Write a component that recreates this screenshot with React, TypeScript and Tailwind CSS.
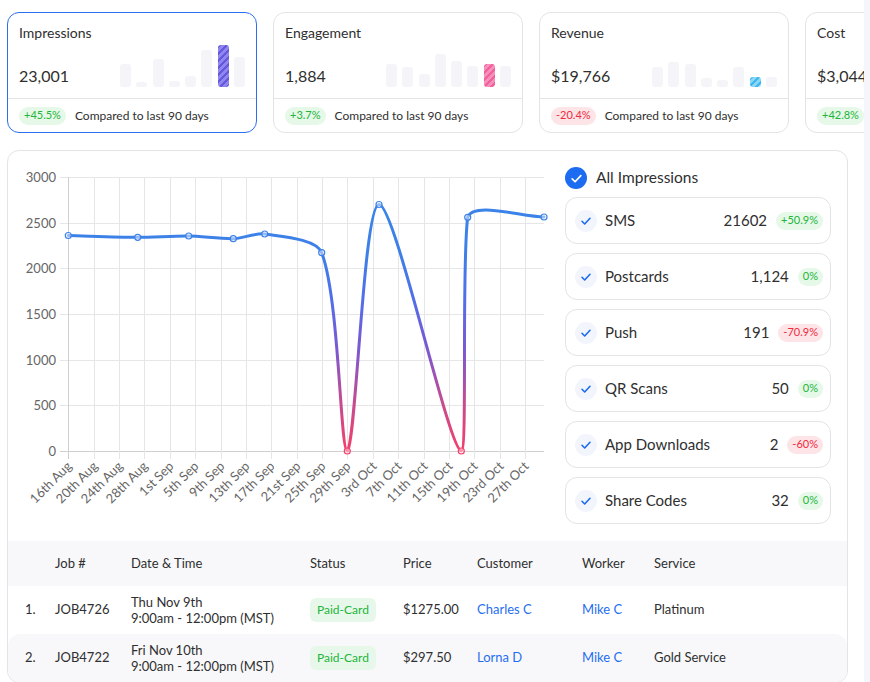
import React from "react";

type Card = {
  title: string;
  value: string;
  change: string;
  up: boolean;
  bars: number[];
  hi: number;
  hiClass: string;
  active?: boolean;
};

const CARDS: Card[] = [
  {
    title: "Impressions",
    value: "23,001",
    change: "+45.5%",
    up: true,
    bars: [23, 5, 28, 6, 11, 37, 42, 30],
    hi: 6,
    hiClass: "bg-[repeating-linear-gradient(135deg,#6558dd_0px,#6558dd_2.5px,#8f86ee_2.5px,#8f86ee_5px)]",
    active: true,
  },
  {
    title: "Engagement",
    value: "1,884",
    change: "+3.7%",
    up: true,
    bars: [23, 20, 13, 33, 26, 21, 23, 21],
    hi: 6,
    hiClass: "bg-[repeating-linear-gradient(135deg,#f0609a_0px,#f0609a_2.5px,#f78fba_2.5px,#f78fba_5px)]",
  },
  {
    title: "Revenue",
    value: "$19,766",
    change: "-20.4%",
    up: false,
    bars: [20, 25, 23, 9, 7, 20, 10, 10],
    hi: 6,
    hiClass: "bg-[repeating-linear-gradient(135deg,#3fb6ee_0px,#3fb6ee_2.5px,#8ad6f7_2.5px,#8ad6f7_5px)]",
  },
  {
    title: "Cost",
    value: "$3,044",
    change: "+42.8%",
    up: true,
    bars: [18, 24, 12, 30, 14, 22, 9, 16],
    hi: 3,
    hiClass: "bg-[repeating-linear-gradient(135deg,#f5a524_0px,#f5a524_2.5px,#f8c46e_2.5px,#f8c46e_5px)]",
  },
];

const CHANNELS = [
  { name: "SMS", count: "21602", change: "+50.9%", up: true },
  { name: "Postcards", count: "1,124", change: "0%", up: true },
  { name: "Push", count: "191", change: "-70.9%", up: false },
  { name: "QR Scans", count: "50", change: "0%", up: true },
  { name: "App Downloads", count: "2", change: "-60%", up: false },
  { name: "Share Codes", count: "32", change: "0%", up: true },
];

const JOBS = [
  { n: "1.", job: "JOB4726", day: "Thu Nov 9th", time: "9:00am - 12:00pm (MST)", price: "$1275.00", customer: "Charles C", worker: "Mike C", service: "Platinum" },
  { n: "2.", job: "JOB4722", day: "Fri Nov 10th", time: "9:00am - 12:00pm (MST)", price: "$297.50", customer: "Lorna D", worker: "Mike C", service: "Gold Service" },
];

const X_LABELS = [
  "16th Aug", "20th Aug", "24th Aug", "28th Aug", "1st Sep", "5th Sep", "9th Sep", "13th Sep", "17th Sep",
  "21st Sep", "25th Sep", "29th Sep", "3rd Oct", "7th Oct", "11th Oct", "15th Oct", "19th Oct", "23rd Oct", "27th Oct",
];

const POINTS: [number, number][] = [
  [68.3, 235.5], [137.7, 237.3], [188.7, 236], [233.3, 238.7], [264.7, 234], [321.7, 252.7],
  [347.3, 451], [379, 204.5], [461.3, 451], [467.7, 217.3], [544, 217],
];

const TOP = 177;
const BOTTOM = 451;
const LEFT = 68.3;
const RIGHT = 544;

function Badge({ text, up, className = "" }: { text: string; up: boolean; className?: string }) {
  return (
    <span
      className={`inline-flex h-[18px] items-center rounded-full px-[5px] text-[11px] ${
        up ? "bg-[#e6f8e8] text-[#22b53a]" : "bg-[#fde4e6] text-[#ef2a3f]"
      } ${className}`}
    >
      {text}
    </span>
  );
}

function StatCard({ card }: { card: Card }) {
  return (
    <div
      className={`w-[250px] shrink-0 rounded-xl border bg-white ${
        card.active ? "border-[#2a6ff0]" : "border-[#e4e4e7]"
      }`}
    >
      <div className="px-[11px] pt-[10px] pb-[11px]">
        <p className="text-[14px] leading-5">{card.title}</p>
        <div className="flex h-[44px] items-end justify-between">
          <span className="text-[16px] leading-[22px]">{card.value}</span>
          <div className="flex items-end gap-[5.3px]">
            {card.bars.map((h, i) => (
              <div
                key={i}
                className={`w-[11px] rounded-[3px] ${i === card.hi ? card.hiClass : "bg-[#f4f4f9]"}`}
                style={{ height: h }}
              />
            ))}
          </div>
        </div>
      </div>
      <div className="flex h-[34px] items-center gap-[9px] border-t border-[#e4e4e7] px-[11px]">
        <Badge text={card.change} up={card.up} />
        <span className="whitespace-nowrap text-[12px]">Compared to last 90 days</span>
      </div>
    </div>
  );
}

function splinePath(pts: [number, number][], t: number) {
  const cps = pts.map((p, i) => {
    const prev = pts[i - 1] ?? p;
    const next = pts[i + 1] ?? p;
    const d01 = Math.hypot(p[0] - prev[0], p[1] - prev[1]);
    const d12 = Math.hypot(next[0] - p[0], next[1] - p[1]);
    const sum = d01 + d12 || 1;
    const fa = (t * d01) / sum;
    const fb = (t * d12) / sum;
    return {
      inn: [p[0] - fa * (next[0] - prev[0]), p[1] - fa * (next[1] - prev[1])],
      out: [p[0] + fb * (next[0] - prev[0]), p[1] + fb * (next[1] - prev[1])],
    };
  });
  const clamp = (v: number, a: number, b: number) => Math.min(Math.max(v, Math.min(a, b)), Math.max(a, b));
  let d = `M${pts[0][0]},${pts[0][1]}`;
  for (let i = 1; i < pts.length; i++) {
    const a = pts[i - 1];
    const b = pts[i];
    const c1x = clamp(cps[i - 1].out[0], a[0], b[0]);
    const c1y = clamp(cps[i - 1].out[1], TOP, BOTTOM);
    const c2x = clamp(cps[i].inn[0], a[0], b[0]);
    const c2y = clamp(cps[i].inn[1], TOP, BOTTOM);
    d += ` C${c1x.toFixed(2)},${c1y.toFixed(2)} ${c2x.toFixed(2)},${c2y.toFixed(2)} ${b[0]},${b[1]}`;
  }
  return d;
}

function Chart() {
  const yTicks = [0, 500, 1000, 1500, 2000, 2500, 3000];
  const step = (525 - LEFT) / 18;
  return (
    <svg width={549} height={390} viewBox="8 151 549 390" className="shrink-0">
      <defs>
        <linearGradient id="line" gradientUnits="userSpaceOnUse" x1="0" y1={TOP} x2="0" y2={BOTTOM}>
          <stop offset="0" stopColor="#3a86e8" />
          <stop offset="0.27" stopColor="#3d80e8" />
          <stop offset="0.45" stopColor="#526ee8" />
          <stop offset="0.63" stopColor="#7b58d2" />
          <stop offset="0.82" stopColor="#c44c92" />
          <stop offset="1" stopColor="#f43f6a" />
        </linearGradient>
      </defs>
      {yTicks.map((v) => {
        const y = Math.round(BOTTOM - (v * (BOTTOM - TOP)) / 3000) + 0.5;
        return (
          <g key={v}>
            <line x1={60} x2={RIGHT} y1={y} y2={y} stroke={v === 0 ? "#cfcfcf" : "#e6e6e6"} strokeWidth={1} />
            <text x={56} y={y + 4.5} textAnchor="end" fontSize={13} fill="#666">
              {v}
            </text>
          </g>
        );
      })}
      {X_LABELS.map((l, i) => {
        const x = Math.round(LEFT + i * step) + 0.5;
        return (
          <g key={l}>
            <line x1={x} x2={x} y1={TOP} y2={459} stroke={i === 0 ? "#cfcfcf" : "#e6e6e6"} strokeWidth={1} />
            <text
              transform={`translate(${x + 4},${467}) rotate(-45)`}
              textAnchor="end"
              fontSize={13}
              fill="#666"
            >
              {l}
            </text>
          </g>
        );
      })}
      <path d={splinePath(POINTS, 0.28)} fill="none" stroke="url(#line)" strokeWidth={3} strokeLinecap="round" />
      {POINTS.map(([x, y], i) => (
        <circle key={i} cx={x} cy={y} r={3} fill="rgba(255,255,255,0.45)" stroke="url(#line)" strokeWidth={1.2} />
      ))}
    </svg>
  );
}

function Check({ color, size = 12 }: { color: string; size?: number }) {
  return (
    <svg width={size} height={size} viewBox="0 0 12 12" fill="none">
      <path d="M2 6.3 4.7 9 10 3.3" stroke={color} strokeWidth={1.6} strokeLinecap="round" strokeLinejoin="round" />
    </svg>
  );
}

function ChannelList() {
  return (
    <div className="ml-2 w-[266px] pt-4">
      <div className="flex h-[22px] items-center gap-[9px]">
        <span className="flex h-[22px] w-[22px] items-center justify-center rounded-full bg-[#1b6cf0]">
          <Check color="#fff" size={13} />
        </span>
        <span className="text-[15.5px]">All Impressions</span>
      </div>
      <div className="mt-2 flex flex-col gap-[9px]">
        {CHANNELS.map((c) => (
          <div
            key={c.name}
            className="flex h-[47px] items-center rounded-xl border border-[#e4e4e7] pr-[7px] pl-[9px]"
          >
            <span className="flex h-[22px] w-[22px] items-center justify-center rounded-full bg-[#f3f5fd]">
              <Check color="#1b6cf0" />
            </span>
            <span className="ml-2 flex-1 text-[15px]">{c.name}</span>
            <span className="text-[15px]">{c.count}</span>
            <Badge text={c.change} up={c.up} className="ml-[9px]" />
          </div>
        ))}
      </div>
    </div>
  );
}

const COLS = "grid grid-cols-[30px_76px_179px_93px_74px_105px_72px_1fr] items-center pl-[17px]";

function JobsTable() {
  return (
    <div className="text-[13px]">
      <div className={`${COLS} h-[45px] bg-[#f8f8fa]`}>
        <span />
        <span>Job #</span>
        <span>Date &amp; Time</span>
        <span>Status</span>
        <span>Price</span>
        <span>Customer</span>
        <span>Worker</span>
        <span>Service</span>
      </div>
      {JOBS.map((j, i) => (
        <div key={j.job} className={`${COLS} h-[48px] ${i % 2 === 1 ? "rounded-xl bg-[#f8f8fa]" : ""}`}>
          <span>{j.n}</span>
          <span>{j.job}</span>
          <span className="leading-4">
            {j.day}
            <br />
            {j.time}
          </span>
          <span>
            <span className="inline-flex h-[24px] items-center rounded-md bg-[#e7f8ea] px-[7px] text-[12px] text-[#22b53a]">
              Paid-Card
            </span>
          </span>
          <span>{j.price}</span>
          <span className="text-[#1f6ff0]">{j.customer}</span>
          <span className="text-[#1f6ff0]">{j.worker}</span>
          <span>{j.service}</span>
        </div>
      ))}
    </div>
  );
}

export default function App() {
  return (
    <div className="flex h-[682px] overflow-hidden bg-white font-[Lato,'Noto_Sans',sans-serif] text-[#2f2f2f]">
      <div className="w-[864px] shrink-0 overflow-hidden">
        <div className="flex gap-4 pt-3 pl-[7px]">
          {CARDS.map((c) => (
            <StatCard key={c.title} card={c} />
          ))}
        </div>
        <div className="mt-[17px] ml-[7px] w-[841px] rounded-xl border border-[#e4e4e7]">
          <div className="flex h-[390px]">
            <Chart />
            <ChannelList />
          </div>
          <JobsTable />
        </div>
      </div>
      <div className="flex-1 bg-[#f4f6fb]" />
    </div>
  );
}
